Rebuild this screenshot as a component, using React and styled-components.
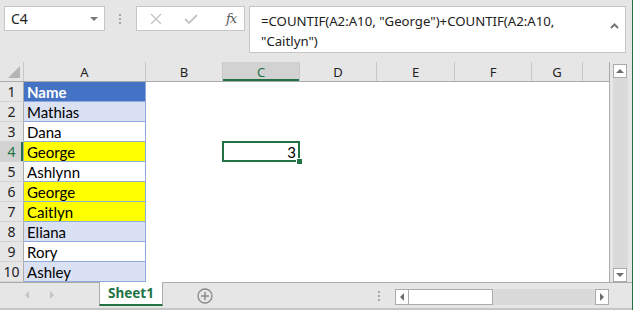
import styled, { createGlobalStyle, css } from "styled-components";

const GlobalStyle = createGlobalStyle`
  html, body {
    margin: 0;
    padding: 0;
    background: #e6e6e6;
  }
  * { box-sizing: border-box; }
`;

const GREEN = "#217346";

const Window = styled.div`
  width: 633px;
  height: 310px;
  background: #e6e6e6;
  border-right: 1px solid ${GREEN};
  display: flex;
  flex-direction: column;
  overflow: hidden;
  font-family: "Noto Sans", "Open Sans", sans-serif;
`;

/* ---------- formula bar ---------- */

const FormulaBar = styled.div`
  height: 62px;
  flex: none;
  display: flex;
  align-items: flex-start;
  padding: 6px 6px 0 4px;
`;

const NameBox = styled.div`
  width: 101px;
  height: 25px;
  background: #fff;
  border: 1px solid #c6c6c6;
  display: flex;
  align-items: center;
  justify-content: space-between;
  padding: 0 6px 0 6px;
  font-size: 14px;
  color: #222;
`;

const Grip = styled.div`
  display: flex;
  flex-direction: column;
  gap: 2px;
  margin: ${(p) => p.$margin};
  span {
    width: 2px;
    height: 2px;
    background: #a6a6a6;
  }
`;

const FxBox = styled.div`
  width: 109px;
  height: 25px;
  background: #fff;
  border: 1px solid #c6c6c6;
  display: flex;
  align-items: center;
  padding-left: 13px;
  gap: 22px;
`;

const Fx = styled.span`
  font-family: "DejaVu Serif", "Liberation Serif", serif;
  font-style: italic;
  font-size: 13px;
  color: #5a5a5a;
  margin-left: 6px;
  letter-spacing: -1px;
`;

const FormulaInput = styled.div`
  flex: 1;
  height: 47px;
  margin-left: 4px;
  background: #fff;
  border: 1px solid #c6c6c6;
  display: flex;
  justify-content: space-between;
  padding: 4px 6px 0 11px;
  font-size: 13.2px;
  line-height: 20px;
  color: #222;
`;

const Caret = styled.div`
  padding-top: 3px;
`;

/* ---------- sheet ---------- */

const SheetRow = styled.div`
  flex: none;
  height: 220px;
  display: flex;
`;

const Grid = styled.div`
  width: 610px;
  display: flex;
  flex-direction: column;
  border-right: 1px solid #ababab;
  background: #fff;
`;

const Row = styled.div`
  display: flex;
  height: 20px;
  flex: none;
`;

const HeadRow = styled(Row)`
  background: #e6e6e6;
  border-bottom: 1px solid #ababab;
`;

const ColHead = styled.div`
  width: ${(p) => p.$w}px;
  flex: none;
  display: flex;
  align-items: center;
  justify-content: center;
  font-size: 13px;
  color: #222;
  border-right: 1px solid #c8c8c8;
  ${(p) =>
    p.$active &&
    css`
      background: #d2d2d2;
      color: ${GREEN};
      box-shadow: inset 0 -2px 0 ${GREEN};
    `}
  ${(p) => p.$last && css`flex: 1; border-right: none;`}
`;

const Corner = styled.div`
  width: 24px;
  flex: none;
  border-right: 1px solid #c8c8c8;
  display: flex;
  align-items: flex-end;
  justify-content: flex-end;
  padding: 0 3px 3px 0;
`;

const RowHead = styled.div`
  width: 24px;
  flex: none;
  background: #e6e6e6;
  border-right: 1px solid #ababab;
  border-bottom: 1px solid #d4d4d4;
  display: flex;
  align-items: center;
  justify-content: center;
  font-size: 14px;
  color: #222;
  ${(p) =>
    p.$active &&
    css`
      background: #d2d2d2;
      color: ${GREEN};
      box-shadow: inset -2px 0 0 ${GREEN};
    `}
`;

const fills = {
  head: "#4472c4",
  band: "#d9e1f2",
  plain: "#ffffff",
  hit: "#ffff00",
};

const NameCell = styled.div`
  width: 122px;
  flex: none;
  background: ${(p) => fills[p.$fill]};
  border-right: 1px solid #8ea9db;
  border-bottom: 1px solid #8ea9db;
  display: flex;
  align-items: center;
  padding-left: 3px;
  font-family: "Lato", "Noto Sans", sans-serif;
  font-size: 15px;
  color: ${(p) => (p.$fill === "head" ? "#fff" : "#000")};
  font-weight: ${(p) => (p.$fill === "head" ? 700 : 400)};
`;

const Cell = styled.div`
  width: ${(p) => p.$w}px;
  flex: none;
  position: relative;
  display: flex;
  align-items: center;
  justify-content: flex-end;
  padding-right: 4px;
  font-family: "Lato", "Noto Sans", sans-serif;
  font-size: 15px;
  color: #000;
  ${(p) =>
    p.$selected &&
    css`
      &::before {
        content: "";
        position: absolute;
        left: -1px;
        top: -1px;
        right: 0;
        bottom: 0;
        border: 2px solid ${GREEN};
      }
      &::after {
        content: "";
        position: absolute;
        right: -3px;
        bottom: -3px;
        width: 5px;
        height: 5px;
        background: ${GREEN};
        border: 1px solid #fff;
      }
    `}
`;

const Spacer = styled.div`
  flex: 1;
`;

const VScroll = styled.div`
  flex: 1;
  display: flex;
  flex-direction: column;
  padding: 2px 4px 0 3px;
`;

const ScrollBtn = styled.div`
  width: ${(p) => p.$w || 14}px;
  height: ${(p) => p.$h || 14}px;
  flex: none;
  background: #fff;
  border: 1px solid #ababab;
  display: flex;
  align-items: center;
  justify-content: center;
`;

const VTrack = styled.div`
  flex: 1;
  background: #dadada;
`;

/* ---------- bottom bar ---------- */

const BottomBar = styled.div`
  flex: 1;
  display: flex;
  align-items: flex-start;
  border-top: 1px solid #ababab;
  border-bottom: 2px solid #c6c6c6;
`;

const NavArrows = styled.div`
  width: 99px;
  height: 24px;
  display: flex;
  align-items: center;
  gap: 21px;
  padding-left: 25px;
`;

const Tab = styled.div`
  width: 64px;
  height: 24px;
  margin-top: -1px;
  background: #fff;
  border-left: 1px solid #ababab;
  border-right: 1px solid #ababab;
  border-bottom: 2px solid ${GREEN};
  display: flex;
  align-items: center;
  justify-content: center;
  font-size: 13.5px;
  font-weight: 700;
  color: ${GREEN};
`;

const AddSheet = styled.div`
  margin: 5px 0 0 34px;
  display: flex;
`;

const HScroll = styled.div`
  margin: 6px 23px 0 0;
  width: 214px;
  height: 16px;
  display: flex;
`;

const Thumb = styled.div`
  width: 84px;
  background: #fff;
  border: 1px solid #ababab;
  border-left: none;
`;

const HTrack = styled.div`
  flex: 1;
  background: #dadada;
`;

const Tri = ({ dir = "down", color = "#6e6e6e", size = 7 }) => {
  const pts = {
    down: "0,0 6,0 3,3",
    up: "0,3 6,3 3,0",
    left: "3,0 3,6 0,3",
    right: "0,0 0,6 3,3",
  }[dir];
  const vertical = dir === "down" || dir === "up";
  return (
    <svg
      width={vertical ? size : size / 2}
      height={vertical ? size / 2 : size}
      viewBox={vertical ? "0 0 6 3" : "0 0 3 6"}
    >
      <polygon points={pts} fill={color} />
    </svg>
  );
};

const columns = [
  { key: "B", w: 77 },
  { key: "C", w: 77 },
  { key: "D", w: 77 },
  { key: "E", w: 78 },
  { key: "F", w: 77 },
  { key: "G", w: 51 },
];

const names = [
  ["Name", "head"],
  ["Mathias", "band"],
  ["Dana", "plain"],
  ["George", "hit"],
  ["Ashlynn", "plain"],
  ["George", "hit"],
  ["Caitlyn", "hit"],
  ["Eliana", "band"],
  ["Rory", "plain"],
  ["Ashley", "band"],
];

const App = () => {
  return (
    <Window>
      <GlobalStyle />
      <FormulaBar>
        <NameBox>
          <span>C4</span>
          <Tri dir="down" size={8} color="#777" />
        </NameBox>
        <Grip $margin="8px 15px 0 14px">
          <span />
          <span />
          <span />
        </Grip>
        <FxBox>
          <svg width="12" height="12" viewBox="0 0 12 12">
            <path d="M1 1 L11 11 M11 1 L1 11" stroke="#c4c4c4" strokeWidth="1.4" />
          </svg>
          <svg width="14" height="12" viewBox="0 0 14 12">
            <path d="M1 6 L5 10 L13 2" stroke="#c4c4c4" strokeWidth="1.8" fill="none" />
          </svg>
          <Fx>fx</Fx>
        </FxBox>
        <FormulaInput>
          <div>
            =COUNTIF(A2:A10, "George")+COUNTIF(A2:A10,
            <br />
            "Caitlyn")
          </div>
          <Caret>
            <svg width="9" height="6" viewBox="0 0 9 6">
              <path d="M1 5 L4.5 1.5 L8 5" stroke="#777" strokeWidth="2" fill="none" />
            </svg>
          </Caret>
        </FormulaInput>
      </FormulaBar>

      <SheetRow>
        <Grid>
          <HeadRow>
            <Corner>
              <svg width="12" height="12" viewBox="0 0 12 12">
                <polygon points="12,0 12,12 0,12" fill="#b5b5b5" />
              </svg>
            </Corner>
            <ColHead $w={122}>A</ColHead>
            {columns.map((c) => (
              <ColHead key={c.key} $w={c.w} $active={c.key === "C"}>
                {c.key}
              </ColHead>
            ))}
            <ColHead $last />
          </HeadRow>
          {names.map(([name, fill], i) => (
            <Row key={i}>
              <RowHead $active={i === 3}>{i + 1}</RowHead>
              <NameCell $fill={fill}>{name}</NameCell>
              <Cell $w={77} />
              <Cell $w={77} $selected={i === 3}>
                {i === 3 ? "3" : ""}
              </Cell>
              <Spacer />
            </Row>
          ))}
        </Grid>
        <VScroll>
          <ScrollBtn>
            <Tri dir="up" size={8} />
          </ScrollBtn>
          <VTrack />
          <ScrollBtn>
            <Tri dir="down" size={8} />
          </ScrollBtn>
        </VScroll>
      </SheetRow>

      <BottomBar>
        <NavArrows>
          <Tri dir="left" size={8} color="#c4c4c4" />
          <Tri dir="right" size={8} color="#c4c4c4" />
        </NavArrows>
        <Tab>Sheet1</Tab>
        <AddSheet>
          <svg width="16" height="16" viewBox="0 0 16 16">
            <circle cx="8" cy="8" r="7" stroke="#8a8a8a" strokeWidth="1.3" fill="none" />
            <path d="M8 4 V12 M4 8 H12" stroke="#8a8a8a" strokeWidth="1.5" />
          </svg>
        </AddSheet>
        <Grip $margin="8px 15px 0 auto">
          <span />
          <span />
          <span />
        </Grip>
        <HScroll>
          <ScrollBtn $h={16}>
            <Tri dir="left" size={8} />
          </ScrollBtn>
          <Thumb />
          <HTrack />
          <ScrollBtn $h={16}>
            <Tri dir="right" size={8} />
          </ScrollBtn>
        </HScroll>
      </BottomBar>
    </Window>
  );
};

export default App;
